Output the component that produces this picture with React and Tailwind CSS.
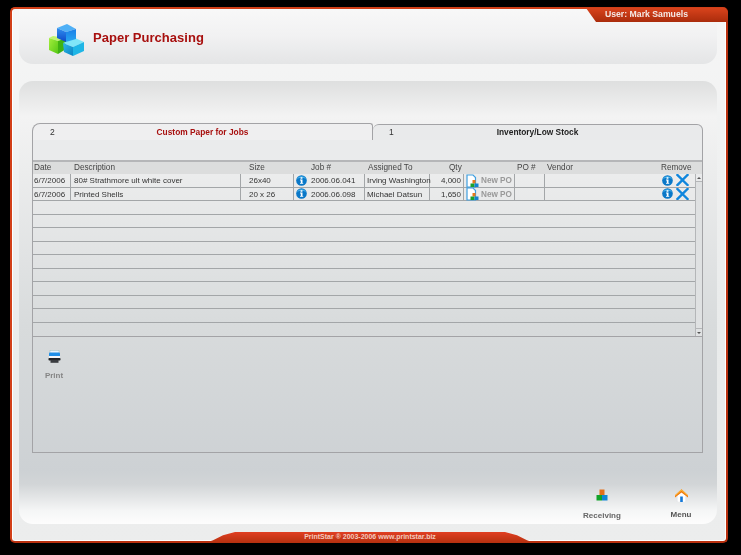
const font = { fontFamily: '"Liberation Sans", Arial, sans-serif' };

function Cubes() {
  return (
    <svg width="36" height="34" viewBox="0 0 36 34">
      <defs>
        <linearGradient id="b1" x1="0" y1="0" x2="0" y2="1"><stop offset="0" stopColor="#2f8ff0" /><stop offset="1" stopColor="#0d49c8" /></linearGradient>
        <linearGradient id="b2" x1="0" y1="0" x2="0" y2="1"><stop offset="0" stopColor="#1c7fe8" /><stop offset="1" stopColor="#27a6f0" /></linearGradient>
        <linearGradient id="g1" x1="0" y1="0" x2="1" y2="1"><stop offset="0" stopColor="#a4ee3c" /><stop offset="1" stopColor="#55c814" /></linearGradient>
        <linearGradient id="c1" x1="0" y1="0" x2="1" y2="1"><stop offset="0" stopColor="#2fb8e6" /><stop offset="1" stopColor="#0a84c4" /></linearGradient>
      </defs>
      <path d="M0 15l4-2 13 2-8 3z" fill="#c0f56e" /><path d="M0 15l9 3v13l-9-4z" fill="url(#g1)" /><path d="M9 18l8-3v11l-8 5z" fill="#3fb212" />
      <path d="M14 20l12-5 9 4-11 5z" fill="#7fe6f8" /><path d="M14 20l10 4v9l-9-4z" fill="url(#c1)" /><path d="M24 24l11-5v9l-11 5z" fill="#1fb6e6" />
      <path d="M8 5L18 1l9 5-10 3z" fill="#4fb0f6" /><path d="M8 5l9 4v10l-9-4z" fill="url(#b1)" /><path d="M17 9l10-3v10l-10 3z" fill="url(#b2)" />
    </svg>
  );
}

function Info({ size = 11 }) {
  return (
    <svg width={size} height={size} viewBox="0 0 12 12" className="shrink-0 -mt-[2px]">
      <circle cx="6" cy="6" r="5.8" fill="#0a78c8" />
      <path d="M1 4.5A5.5 5.5 0 0 1 11 4.5C8 2.6 4 2.6 1 4.5z" fill="#45b2ec" />
      <rect x="5" y="2.4" width="2" height="1.7" fill="#fff" />
      <path d="M4.4 5h2.7v3.6h.8v1H4.4v-1h.8V6h-.8z" fill="#fff" />
    </svg>
  );
}

function Cross() {
  return (
    <svg width="13" height="12" viewBox="0 0 13 12" className="shrink-0 -mt-[2px]">
      <path d="M1.5 1l10 10M11.5 1l-10 10" stroke="#0f86dd" strokeWidth="2.4" strokeLinecap="square" fill="none" />
    </svg>
  );
}

function DocIcon() {
  return (
    <svg width="13" height="14" viewBox="0 0 13 14" className="shrink-0 -mt-[1px]">
      <path d="M1 1h6l2.5 2.5V13H1z" fill="#fff" stroke="#3f9fe0" strokeWidth="1.2" />
      <rect x="6.5" y="6" width="3" height="3.5" fill="#e8791a" />
      <rect x="4.5" y="9.5" width="4" height="3.5" fill="#1aa02c" />
      <rect x="8.5" y="9.5" width="4" height="3.5" fill="#1283cf" />
    </svg>
  );
}

function Printer() {
  return (
    <svg width="13" height="13" viewBox="0 0 13 13">
      <rect x="2" y="0.5" width="9" height="3" fill="#e8f2fb" stroke="#7aa" strokeWidth=".3" />
      <rect x="1" y="2.5" width="11" height="5" rx="1" fill="#1f8fe8" />
      <rect x="1" y="6" width="11" height="2.6" fill="#f4f6f8" />
      <rect x="0.5" y="8" width="12" height="2.5" rx=".8" fill="#202225" />
      <rect x="2.5" y="9.8" width="8" height="3" fill="#3a3c40" />
    </svg>
  );
}

function Blocks() {
  return (
    <svg width="12" height="12" viewBox="0 0 12 12">
      <rect x="3.5" y="0.5" width="5" height="5.5" fill="#e5701a" />
      <rect x="0.5" y="6" width="5.5" height="5.5" fill="#12a32a" />
      <rect x="6" y="6" width="5.5" height="5.5" fill="#1288d6" />
    </svg>
  );
}

function Home() {
  return (
    <svg width="13" height="13" viewBox="0 0 13 13">
      <path d="M2.3 6.5V12.3c0 .4.3.7.7.7h7c.4 0 .7-.3.7-.7V6.5L6.5 3z" fill="#fff" stroke="#d8dde2" strokeWidth=".4" />
      <path d="M6.5 .3L13 6.2V8.6L6.5 3.4 0 8.6V6.2z" fill="#f0780a" />
      <path d="M6.5 .3L13 6.2 12.6 6.9 6.5 1.7 .4 6.9 0 6.2z" fill="#fcb53a" />
      <rect x="5.2" y="7.5" width="2.6" height="5.5" fill="#1478d8" />
    </svg>
  );
}

const cols = "grid grid-cols-[38px_170px_53px_71px_65px_34px_51px_30px_115px_35px] grid-rows-[100%]";

const rows = [
  { date: "6/7/2006", desc: "80# Strathmore ult white cover", size: "26x40", job: "2006.06.041", who: "Irving Washington", qty: "4,000" },
  { date: "6/7/2006", desc: "Printed Shells", size: "20 x 26", job: "2006.06.098", who: "Michael Datsun", qty: "1,650" },
];

const empties = [1, 2, 3, 4, 5, 6, 7, 8, 9, 10];

function Row({ r }) {
  const cell = "border-r border-[#a3a6a8] flex items-center h-full pt-[2px]";
  return (
    <div className={`${cols} h-[13.55px] border-b border-[#a3a6a8] text-[8px] leading-none text-[#333]`}>
      <div className={`${cell} pl-[1px]`}>{r.date}</div>
      <div className={`${cell} pl-[3px]`}>{r.desc}</div>
      <div className={`${cell} pl-[8px]`}>{r.size}</div>
      <div className={`${cell} pl-[2px] gap-[4px]`}><Info /><span>{r.job}</span></div>
      <div className={`${cell} pl-[2px] whitespace-nowrap`}>{r.who}</div>
      <div className={`${cell} justify-end pr-[2px]`}>{r.qty}</div>
      <div className={`${cell} pl-[2px] gap-[2px]`}><DocIcon /><span className="font-bold text-[#999] text-[8.2px]">New PO</span></div>
      <div className={cell} />
      <div className="h-full" />
      <div className="flex items-center gap-[3px] pl-[2px] pt-[2px] h-full"><Info /><Cross /></div>
    </div>
  );
}

function ActionButton({ children, label, className, labelClass }) {
  return (
    <div className={`flex flex-col items-center ${className}`}>
      {children}
      <span className={`font-bold text-[8px] leading-none ${labelClass}`}>{label}</span>
    </div>
  );
}

export default function App() {
  return (
    <div style={font} className="w-[741px] h-[555px] bg-black overflow-hidden pt-[7px] pl-[10px]">
      <div className="relative w-[718px] h-[536px] rounded-[5px] border-2 border-[#d23f18] border-r-[#b9300f] border-b-[#b9300f] bg-[linear-gradient(180deg,#f6f6f6_0%,#e9ebeb_60%,#eceded_100%)] shadow-[inset_1px_0_0_#fff,inset_-1px_0_0_#fff,inset_0_-1px_0_#fff] flex flex-col pl-[7px] pr-[9px] blur-[0.5px]">
        <div className="absolute top-[-1px] right-[-2px] w-[142px] h-[14px] bg-[linear-gradient(180deg,#d9431c,#aa2c0c)] [clip-path:polygon(0_0,100%_0,100%_100%,10px_100%)] rounded-tr-[5px] flex items-center justify-end pr-[40px] text-[8.7px] font-bold text-[#f4e8e4]">
          User: Mark Samuels
        </div>

        <div className="h-[55px] shrink-0 rounded-b-[14px] bg-[linear-gradient(180deg,#f8f8f8_0%,#f1f1f2_50%,#e4e5e6_100%)] flex items-start pl-[30px] pt-[14px] gap-[8px]">
          <Cubes />
          <div className="mt-[8px] text-[13px] leading-none font-bold text-[#a8100f] tracking-[0.02px]">Paper Purchasing</div>
        </div>

        <div className="mt-[17px] h-[443px] shrink-0 rounded-[14px] bg-[linear-gradient(180deg,#dedfdf_0%,#f3f3f3_8%,#d8dbdc_55%,#cdd1d4_88%,#d2d5d7_91%,#f5f6f6_97%,#fdfdfd_100%)] flex flex-col pt-[42px] pl-[13px] pr-[14px]">
          <div className="flex h-[17px] leading-none">
            <div className="w-[341px] h-[17px] rounded-tl-[8px] rounded-tr-[3px] border-l border-t border-r border-[#a3a3a6] bg-[#efeff0] grid grid-cols-[38px_1fr_38px] pt-[4px] text-[8.35px]">
              <span className="text-[#333] text-[8.5px] pl-[17px]">2</span>
              <span className="text-center font-bold text-[#a8100f]">Custom Paper for Jobs</span>
            </div>
            <div className="w-[330px] h-[17px] mt-[1px] rounded-t-[6px] border-t border-r border-b border-[#a3a3a6] bg-[#e9eaeb] grid grid-cols-[38px_1fr_38px] pt-[3px] text-[8.35px]">
              <span className="text-[#333] text-[8.5px] pl-[16px]">1</span>
              <span className="text-center font-bold text-[#222]">Inventory/Low Stock</span>
            </div>
          </div>

          <div className="w-[671px] h-[313px] border-l border-r border-b border-[#a3a3a6] flex flex-col">
            <div className="h-[22px] border-b-2 border-[#b5b6b8] bg-[#eaebec]" />
            <div className={`${cols} h-[12px] items-center bg-[#dcdddd] text-[8.2px] text-[#444] leading-none pt-[1px]`}>
              <div className="pl-[1px]">Date</div>
              <div className="pl-[3px]">Description</div>
              <div className="pl-[8px]">Size</div>
              <div className="pl-[17px]">Job #</div>
              <div className="pl-[3px]">Assigned To</div>
              <div className="pl-[19px]">Qty</div>
              <div />
              <div className="pl-[2px]">PO #</div>
              <div className="pl-[2px]">Vendor</div>
              <div className="pl-[1px]">Remove</div>
            </div>
            <div className="flex h-[163px] border-b border-[#a3a3a6]">
              <div className="w-[662px]">
                {rows.map((r) => <Row key={r.job} r={r} />)}
                {empties.map((n) => (
                  <div key={n} className="h-[13.55px] border-b border-[#a3a6a8] last:border-b-0" />
                ))}
              </div>
              <div className="w-[8px] border-l border-[#b4b6b8] flex flex-col justify-between bg-[#dfe1e2]">
                <div className="h-[8px] bg-[#e9eaeb] border-b border-[#b4b6b8] flex items-center justify-center">
                  <span className="w-0 h-0 border-x-[2px] border-x-transparent border-b-[2px] border-b-[#555]" />
                </div>
                <div className="h-[8px] bg-[#e0e2e3] border-t border-[#b4b6b8] flex items-center justify-center">
                  <span className="w-0 h-0 border-x-[2px] border-x-transparent border-t-[2px] border-t-[#555]" />
                </div>
              </div>
            </div>
            <div className="pl-[11px] pt-[13px]">
              <ActionButton label="Print" className="w-[20px]" labelClass="text-[#858585] mt-[9px]"><Printer /></ActionButton>
            </div>
          </div>

          <div className="flex justify-end pr-[9px] mt-[36px]">
            <ActionButton label="Receiving" className="w-[40px] -ml-[1px]" labelClass="text-[#666] mt-[11px]"><Blocks /></ActionButton>
            <ActionButton label="Menu" className="w-[24px] ml-[47px] mr-[1px]" labelClass="text-[#555] mt-[9px]"><Home /></ActionButton>
          </div>
        </div>

        <div className="absolute bottom-[-2px] left-[193px] w-[330px] h-[11px] bg-[linear-gradient(180deg,#e13f22,#b5300f)] [clip-path:polygon(0_100%,8px_75%,18px_30%,30px_0,300px_0,312px_30%,322px_75%,100%_100%)] flex items-center justify-center text-[7px] font-bold text-[#f3c9bd]">
          PrintStar ® 2003-2006 www.printstar.biz
        </div>
      </div>
    </div>
  );
}
